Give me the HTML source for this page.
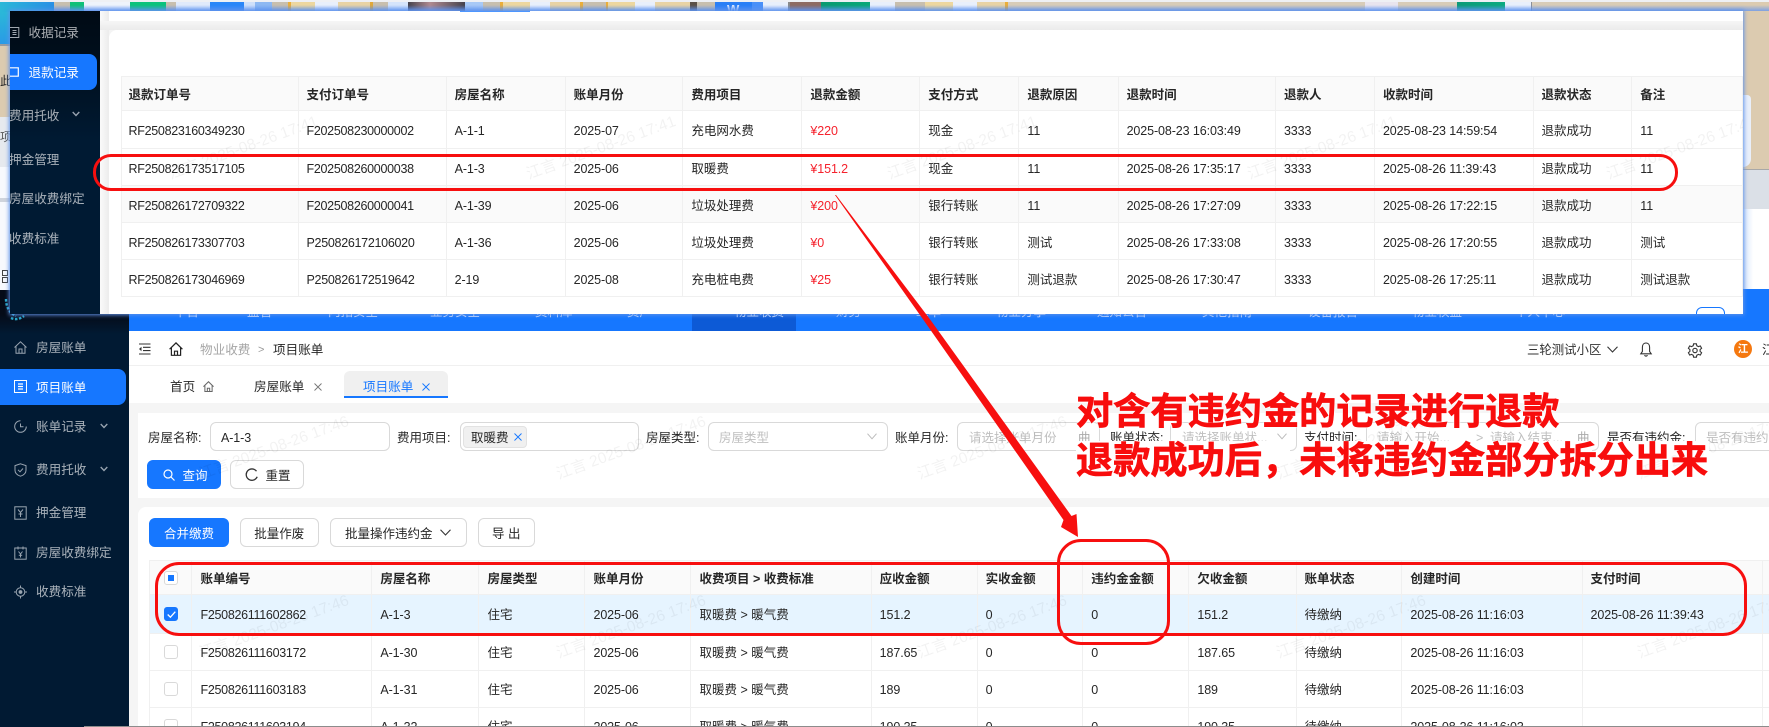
<!DOCTYPE html>
<html lang="zh">
<head>
<meta charset="utf-8">
<title>项目账单</title>
<style>
*{box-sizing:border-box}
html,body{margin:0;padding:0;width:1769px;height:727px;overflow:hidden;background:#fff}
body{position:relative;font-family:"Liberation Sans","Noto Sans CJK SC",sans-serif;font-size:12.5px;color:#262626}
.a{position:absolute}
.t{position:absolute;white-space:nowrap;line-height:16px;height:16px;margin-top:1px}
svg{display:block;overflow:visible}
table{border-collapse:separate;border-spacing:0;table-layout:fixed;position:absolute}
th,td{padding:3px 8px 0;line-height:1;text-align:left;white-space:nowrap;border-right:1px solid #f0f0f0;border-bottom:1px solid #f0f0f0;overflow:hidden;font-size:12.5px}
th{background:#fafafa;font-weight:700;color:#262626;border-top:1px solid #f0f0f0}
th:first-child,td:first-child{border-left:1px solid #f0f0f0;padding-left:7px}
.id{letter-spacing:-.29px}.d{letter-spacing:-.1px}.red{color:#f5222d;letter-spacing:-.1px}
.s td{background:#fafafa}.sel td{background:#e6f4ff}
.wm{position:absolute;white-space:nowrap;font-size:15.5px;line-height:16px;color:rgba(0,0,0,.05);transform:rotate(-20deg);transform-origin:0 100%;pointer-events:none}
.menu{color:rgba(255,255,255,.66);line-height:16px;height:16px;font-size:12.6px;position:absolute;white-space:nowrap}
.box{position:absolute;border:1px solid #d9d9d9;border-radius:6px;background:#fff}
.ph{color:#bfbfbf}
.btn{position:absolute;border:1px solid #d9d9d9;border-radius:6px;background:#fff;height:29px;line-height:28px;padding-top:1px;text-align:center;font-size:12.5px}
.pri{background:#1677ff;border-color:#1677ff;color:#fff}
.cb{display:block;width:14px;height:14px;border:1px solid #d9d9d9;border-radius:3px;background:#fff;margin:-3px 0 0 7px;position:relative}
.nav span{position:absolute;top:-10px;color:#d5e4ff;font-size:12.5px;line-height:16px;white-space:nowrap}
.rb{position:absolute;border:3.2px solid #f70f0f;pointer-events:none}
.big{position:absolute;white-space:nowrap;font-family:'Noto Sans CJK SC','Liberation Sans',sans-serif;font-weight:700;font-size:37.2px;line-height:47px;color:#f80d0d;-webkit-text-stroke:.7px #f80d0d;text-shadow:0 0 1px #fff,0 0 2px #fff,0 0 2px #fff,0 0 3px #fff}
</style>
</head>
<body>

<!-- wallpaper strip and right edge -->
<div class="a" style="left:0;top:0;width:1769px;height:2px;background:#eef0f4"></div>
<div class="a" style="left:0;top:2px;width:1769px;height:10px;background:linear-gradient(90deg,#2bb8d8 0,#2a8fe4 54px,#c8bfae 54px,#c8bfae 70px,#10c078 70px,#10c078 84px,#eef3fb 84px,#eef3fb 130px,#0cc27c 130px,#0cc27c 166px,#c8bfae 166px,#c8bfae 176px,#e0eafb 176px,#e0eafb 210px,#2a86f8 210px,#2a86f8 244px,#cfe0fa 244px,#cfe0fa 255px,#8db8f2 255px,#8db8f2 272px,#c8bfae 272px,#c8bfae 288px,#eaae3a 288px,#eaae3a 291px,#edd79f 291px,#edd79f 315px,#e8effb 315px,#e8effb 338px,#e8d3a4 338px,#e8d3a4 370px,#e0a83a 370px,#e0a83a 373px,#c8bfae 373px,#c8bfae 388px,#d5e4fb 388px,#d5e4fb 408px,#45424c 408px,#b08a90 430px,#45424c 465px,#a8c9f6 465px,#a8c9f6 483px,#c8bfae 483px,#c8bfae 500px,#eaae3a 500px,#eaae3a 503px,#edd79f 503px,#edd79f 530px,#e8effb 530px,#e8effb 550px,#e8d3a4 550px,#e8d3a4 580px,#eaae3a 580px,#eaae3a 583px,#c8bfae 583px,#c8bfae 606px,#eaae3a 606px,#eaae3a 608px,#edd79f 608px,#edd79f 635px,#e8effb 635px,#e8effb 655px,#e8d3a4 655px,#e8d3a4 690px,#5c5148 690px,#5c5148 697px,#c8bfae 697px,#c8bfae 715px,#2a7ff6 715px,#2a7ff6 752px,#4a90f8 752px,#4a90f8 763px,#e8effb 763px,#e8effb 788px,#8a8a8a 788px,#8a8a8a 790px,#8e6a62 790px,#8e6a62 821px,#0a9a70 821px,#0aa878 870px,#e8effb 870px,#e8effb 895px,#c8bfae 895px,#c8bfae 925px,#edd79f 925px,#edd79f 953px,#e8effb 953px,#e8effb 977px,#e8d3a4 977px,#e8d3a4 1005px,#eaae3a 1005px,#eaae3a 1008px,#d8ccb8 1008px,#d8ccb8 1365px,#e8e4ee 1365px,#e8e4ee 1398px,#d8ccb8 1398px,#d8ccb8 1457px,#0c9a78 1457px,#0caa80 1505px,#e8effb 1505px,#e8effb 1531px,#8a8e98 1531px,#8a8e98 1532px,#d8ccb8 1532px,#dccbb0 1769px)"></div>
<div class="a" style="left:727px;top:3px;height:8px;width:20px;overflow:hidden;color:#dfeaff;font-weight:700;font-size:13px;line-height:13px">W</div>
<div class="a" style="left:1420px;top:3px;width:0;height:0"></div>
<div class="a" style="left:54px;top:5px;width:1715px;height:7px;background:linear-gradient(180deg,rgba(110,160,245,0),rgba(90,145,245,.85))"></div>
<div class="a" style="left:1743px;top:11px;width:26px;height:159px;background:#dccbb0"></div>
<div class="a" style="left:1743px;top:95px;width:8px;height:72px;background:#e9effa;border-radius:0 10px 20px 0"></div>
<div class="a" style="left:1743px;top:169px;width:26px;height:40px;background:#dbe0e7;border-top:1px solid #a8a8a8"></div>
<div class="a" style="left:1743px;top:209px;width:26px;height:81px;background:linear-gradient(90deg,#d8e6fb,#fff 40%)"></div>

<!-- left edge -->
<div class="a" style="left:0;top:12px;width:10px;height:32px;background:linear-gradient(180deg,#2bb8d8,#2a9ae6)"></div>
<div class="a" style="left:0;top:44px;width:10px;height:73px;background:#dccbb0;border-top:2px solid #9c9c9c"></div>
<div class="a" style="left:0;top:74px;width:10px;height:14px;overflow:hidden;color:#222;font-size:12px;line-height:14px">此</div>
<div class="a" style="left:0;top:117px;width:10px;height:50px;background:#e6e9ee"></div>
<div class="a" style="left:0;top:130px;width:10px;height:14px;overflow:hidden;color:#555;font-size:12px;line-height:14px">项目</div>
<div class="a" style="left:0;top:167px;width:10px;height:123px;background:#f7f9fd"></div>
<div class="a" style="left:0;top:198px;width:10px;height:4px;background:#cfd4dc"></div>
<div class="a" style="left:2px;top:270px;width:6px;height:6px;border:1.4px solid #444"></div>
<div class="a" style="left:2px;top:277px;width:6px;height:6px;border:1.4px solid #444"></div>

<!-- main app: sidebar -->
<div class="a" style="left:0;top:290px;width:129px;height:437px;background:linear-gradient(180deg,#050b18 0,#050b18 24px,#011a33 44px)"></div>
<svg class="a" style="left:3px;top:296px" width="24" height="28" viewBox="0 0 24 28"><g fill="none" stroke="#28a6c8" stroke-width="2.4" stroke-dasharray="2.5 1.6"><path d="M3 3q0 12 10 17"/><path d="M8 22q6 3 13-2"/></g></svg>

<div class="a" style="left:129px;top:289px;width:1640px;height:42px;background:#1677ff"></div>
<div class="a" style="left:692px;top:289px;width:104px;height:42px;background:#0d5ad6"></div>
<div class="a nav" style="left:129px;top:314px;width:1640px;height:4px;overflow:hidden">
<span style="left:45px">平台</span><span style="left:118px">监管</span><span style="left:199px">内拓安全</span><span style="left:301px">业务安全</span><span style="left:406px">资料库</span><span style="left:498px">资产</span><span style="left:605px">物业收费</span><span style="left:707px">财务</span><span style="left:787px">工单</span><span style="left:867px">物业分享</span><span style="left:968px">通知公告</span><span style="left:1073px">其他指南</span><span style="left:1179px">设备报警</span><span style="left:1283px">物业权益</span><span style="left:1386px">个人中心</span>
</div>

<div class="a" style="left:0;top:369px;width:126px;height:36px;background:#1677ff;border-radius:0 8px 8px 0"></div>
<div class="menu" style="left:36px;top:340px">房屋账单</div>
<div class="menu" style="left:36px;top:380px;color:#fff">项目账单</div>
<div class="menu" style="left:36px;top:419px">账单记录</div>
<div class="menu" style="left:36px;top:462px">费用托收</div>
<div class="menu" style="left:36px;top:505px">押金管理</div>
<div class="menu" style="left:36px;top:545px">房屋收费绑定</div>
<div class="menu" style="left:36px;top:584px">收费标准</div>
<svg class="a" style="left:14px;top:341px" width="13" height="13" viewBox="0 0 13 13" fill="none" stroke="#9aa5b1" stroke-width="1"><path d="M.5 6.5 6.5.8l6 5.7M2 5.5V12.3h9V5.5M5 12.3V8h3v4.3"/></svg>
<svg class="a" style="left:14px;top:380px" width="13" height="13" viewBox="0 0 13 13" fill="none" stroke="#fff" stroke-width="1"><rect x=".5" y=".5" width="12" height="12"/><path d="M4 4h5M4 6.5h5M4 9h5" stroke-width="1.2"/></svg>
<svg class="a" style="left:14px;top:420px" width="13" height="13" viewBox="0 0 13 13" fill="none" stroke="#9aa5b1" stroke-width="1"><path d="M12.3 6.5A5.8 5.8 0 1 1 6.5.7M6.5 3.5v3.2h3"/></svg>
<svg class="a" style="left:14px;top:463px" width="13" height="14" viewBox="0 0 13 14" fill="none" stroke="#9aa5b1" stroke-width="1"><path d="M6.5.8 12 2.6v4.6c0 3-2.6 5-5.5 6-2.900-1-5.500-3-5.500-6V2.600zM4 6.800l2 2 3-3.300"/></svg>
<svg class="a" style="left:14px;top:506px" width="13" height="14" viewBox="0 0 13 14" fill="none" stroke="#9aa5b1" stroke-width="1"><rect x=".8" y=".8" width="11.400" height="12.400"/><path d="M4 3.500l2.500 3 2.500-3M6.500 6.500V11M4.500 8h4"/></svg>
<svg class="a" style="left:14px;top:546px" width="13" height="14" viewBox="0 0 13 14" fill="none" stroke="#9aa5b1" stroke-width="1"><rect x=".8" y="2" width="11.400" height="11.200"/><path d="M4 .5V3.500M9 .5V3.500M4.500 5.500l2 2.500 2-2.500M6.500 8v3.500M4.800 9.300h3.400"/></svg>
<svg class="a" style="left:14px;top:585px" width="13" height="14" viewBox="0 0 13 14" fill="none" stroke="#9aa5b1" stroke-width="1"><circle cx="6.500" cy="7" r="4.300"/><circle cx="6.500" cy="7" r="1.400" fill="#9aa5b1"/><path d="M6.500.5V2.700M6.500 11.300v2.200M0 7h2.200M10.800 7H13"/></svg>
<svg class="a" style="left:100px;top:423px" width="8" height="6" viewBox="0 0 8 6" fill="none" stroke="#9aa5b1" stroke-width="1.300"><path d="M.7 1 4 4.500 7.300 1"/></svg>
<svg class="a" style="left:100px;top:466px" width="8" height="6" viewBox="0 0 8 6" fill="none" stroke="#9aa5b1" stroke-width="1.300"><path d="M.7 1 4 4.500 7.300 1"/></svg>

<!-- main app: content background -->
<div class="a" style="left:129px;top:331px;width:1640px;height:396px;background:#f5f5f5"></div>
<div class="a" style="left:129px;top:331px;width:1640px;height:35px;background:#fff;border-bottom:1px solid #f0f0f0"></div>
<svg class="a" style="left:138px;top:343px" width="13" height="12" viewBox="0 0 13 12" fill="none" stroke="#333" stroke-width="1.100"><path d="M1 1h11.500M5 4.300h7.500M5 7.600h7.500M1 11h11.500"/><path d="M3.500 3.800 1 6l2.500 2.200z" fill="#333" stroke="none"/></svg>
<svg class="a" style="left:169px;top:342px" width="14" height="14" viewBox="0 0 14 14" fill="none" stroke="#222" stroke-width="1.200"><path d="M.6 7.200 7 .9l6.400 6.300M2.400 5.800v7.500h9.200V5.800M5.500 13.300V9.200h3v4.100"/></svg>
<div class="t" style="left:200px;top:341px;color:#a6a6a6;font-size:12.600px">物业收费</div>
<div class="t" style="left:258px;top:341px;color:#999;font-size:11px">&gt;</div>
<div class="t" style="left:273px;top:341px;font-size:12.600px">项目账单</div>
<div class="t" style="left:1527px;top:341px;font-size:12.400px;color:#333">三轮测试小区</div>
<svg class="a" style="left:1607px;top:346px" width="11" height="7" viewBox="0 0 11 7" fill="none" stroke="#333" stroke-width="1.100"><path d="M.5.700 5.500 6l5-5.300"/></svg>
<svg class="a" style="left:1640px;top:342px" width="12" height="15" viewBox="0 0 12 15" fill="none" stroke="#333" stroke-width="1.100"><path d="M6 1C3.600 1 2.400 3 2.400 5.200v4.300L.8 11.800h10.400L9.600 9.500V5.200C9.600 3 8.400 1 6 1zM4.500 13.200c.8 1.300 2.200 1.300 3 0"/></svg>
<svg class="a" style="left:1688px;top:343px" width="14" height="14" viewBox="0 0 14 14" fill="none" stroke="#333" stroke-width="1.100"><path d="M5.600.8h2.800l.4 1.900 1.700.9 1.800-.7 1.300 2.400-1.500 1.300v1.800l1.500 1.300-1.300 2.400-1.800-.7-1.700.9-.4 1.900H5.600l-.4-1.900-1.700-.9-1.800.7L.4 9.700l1.500-1.300V6.600L.4 5.300l1.300-2.400 1.800.7 1.700-.9z"/><circle cx="7" cy="7.500" r="2.200"/></svg>
<div class="a" style="left:1734px;top:340px;width:18px;height:18px;border-radius:50%;background:#f5780f;color:#fff;text-align:center;font-size:10.500px;line-height:18px;font-weight:700">江</div>
<div class="t" style="left:1762px;top:341px;font-size:12.600px">江</div>

<!-- tabs -->
<div class="a" style="left:129px;top:366px;width:1640px;height:37px;background:#fff"></div>
<div class="a" style="left:344px;top:371px;width:104px;height:27px;background:#f0f0f0;border-radius:6px 6px 0 0;border-bottom:2px solid #1677ff"></div>
<div class="t" style="left:170px;top:378px;font-size:12.600px">首页</div>
<svg class="a" style="left:203px;top:381px" width="11" height="11" viewBox="0 0 14 14" fill="none" stroke="#666" stroke-width="1.300"><path d="M.6 7.200 7 .9l6.400 6.300M2.400 5.800v7.500h9.200V5.800M5.500 13.300V9.200h3v4.100"/></svg>
<div class="t" style="left:254px;top:378px;font-size:12.600px">房屋账单</div>
<svg class="a" style="left:314px;top:383px" width="8" height="8" viewBox="0 0 8 8" stroke="#777" stroke-width=".9"><path d="M.5.500l7 7M7.500.500l-7 7"/></svg>
<div class="t" style="left:363px;top:378px;font-size:12.600px;color:#1677ff">项目账单</div>
<svg class="a" style="left:422px;top:383px" width="8" height="8" viewBox="0 0 8 8" stroke="#1677ff" stroke-width=".9"><path d="M.5.500l7 7M7.500.500l-7 7"/></svg>

<!-- filter panel -->
<div class="a" style="left:138px;top:413px;width:1631px;height:85px;background:#fff"></div>
<div class="t" style="left:148px;top:429px">房屋名称:</div>
<div class="box" style="left:210px;top:422px;width:180px;height:29px"></div>
<div class="t" style="left:221px;top:429px;letter-spacing:-.1px">A-1-3</div>
<div class="t" style="left:397px;top:429px">费用项目:</div>
<div class="box" style="left:460px;top:422px;width:179px;height:29px"></div>
<div class="a" style="left:463px;top:426px;width:64px;height:22px;background:#f0f0f0;border:1px solid #e2e2e2;border-radius:4px"></div>
<div class="t" style="left:471px;top:429px">取暖费</div>
<svg class="a" style="left:514px;top:433px" width="8" height="8" viewBox="0 0 8 8" stroke="#1677ff" stroke-width=".9"><path d="M.5.500l7 7M7.500.500l-7 7"/></svg>
<div class="t" style="left:646px;top:429px">房屋类型:</div>
<div class="box" style="left:708px;top:422px;width:180px;height:29px"></div>
<div class="t ph" style="left:719px;top:429px">房屋类型</div>
<svg class="a" style="left:867px;top:433px" width="10" height="7" viewBox="0 0 10 7" fill="none" stroke="#bbb" stroke-width="1"><path d="M.5.700 5 5.800 9.500.700"/></svg>
<div class="t" style="left:895px;top:429px">账单月份:</div>
<div class="box" style="left:957px;top:422px;width:143px;height:29px"></div>
<div class="t ph" style="left:969px;top:429px">请选择账单月份</div>
<div class="t ph" style="left:1078px;top:429px;color:#aaa">曲</div>
<div class="t" style="left:1110px;top:429px">账单状态:</div>
<div class="box" style="left:1170px;top:422px;width:127px;height:29px"></div>
<div class="t ph" style="left:1182px;top:429px">请选择账单状...</div>
<svg class="a" style="left:1277px;top:433px" width="10" height="7" viewBox="0 0 10 7" fill="none" stroke="#bbb" stroke-width="1"><path d="M.5.700 5 5.800 9.500.700"/></svg>
<div class="t" style="left:1304px;top:429px">支付时间:</div>
<div class="box" style="left:1366px;top:422px;width:233px;height:29px"></div>
<div class="t ph" style="left:1377px;top:429px">请输入开始...</div>
<div class="t ph" style="left:1476px;top:429px">&gt;</div>
<div class="t ph" style="left:1490px;top:429px">请输入结束...</div>
<div class="t ph" style="left:1577px;top:429px;color:#aaa">曲</div>
<div class="t" style="left:1607px;top:429px">是否有违约金:</div>
<div class="box" style="left:1695px;top:422px;width:100px;height:29px"></div>
<div class="t ph" style="left:1706px;top:429px">是否有违约金</div>

<div class="btn pri" style="left:147px;top:460px;width:74px;padding-left:22px">查询</div>
<svg class="a" style="left:163px;top:469px" width="12" height="12" viewBox="0 0 12 12" fill="none" stroke="#fff" stroke-width="1.200"><circle cx="5" cy="5" r="4"/><path d="m8 8 3.500 3.500"/></svg>
<div class="btn" style="left:230px;top:460px;width:74px;padding-left:22px">重置</div>
<svg class="a" style="left:245px;top:468px" width="13" height="13" viewBox="0 0 13 13" fill="none" stroke="#333" stroke-width="1.300"><path d="M11.500 3.200A5.700 5.700 0 1 0 12.200 8.800"/></svg>

<!-- table panel -->
<div class="a" style="left:138px;top:507px;width:1631px;height:220px;background:#fff;border-radius:8px 0 0 0;overflow:hidden"></div>
<div class="btn pri" style="left:149px;top:518px;width:80px">合并缴费</div>
<div class="btn" style="left:239.500px;top:518px;width:79.500px">批量作废</div>
<div class="btn" style="left:330px;top:518px;width:137px;text-align:left;padding-left:14px">批量操作违约金</div>
<svg class="a" style="left:440px;top:529px" width="11" height="7" viewBox="0 0 11 7" fill="none" stroke="#333" stroke-width="1.100"><path d="M.5.700 5.500 6l5-5.300"/></svg>
<div class="btn" style="left:477.500px;top:518px;width:57.500px">导 出</div>

<div class="a" style="left:0;top:0;width:1769px;height:726px;overflow:hidden;pointer-events:none">
<table style="left:149.300px;top:560px;width:1663.300px">
<colgroup><col style="width:43.200px"><col style="width:179.900px"><col style="width:107.100px"><col style="width:106px"><col style="width:106px"><col style="width:180.200px"><col style="width:106px"><col style="width:105.600px"><col style="width:106.100px"><col style="width:107.200px"><col style="width:105.900px"><col style="width:180.100px"><col style="width:180px"><col style="width:50px"></colgroup>
<tr style="height:35px"><th><span class="cb"><span class="a" style="left:3px;top:3px;width:6px;height:6px;background:#1677ff"></span></span></th><th>账单编号</th><th>房屋名称</th><th>房屋类型</th><th>账单月份</th><th>收费项目 &gt; 收费标准</th><th>应收金额</th><th>实收金额</th><th>违约金金额</th><th>欠收金额</th><th>账单状态</th><th>创建时间</th><th>支付时间</th><th></th></tr>
<tr class="sel" style="height:38.700px"><td><span class="cb" style="background:#1677ff;border-color:#1677ff"><svg class="a" style="left:2px;top:3px" width="9" height="7" viewBox="0 0 9 7" fill="none" stroke="#fff" stroke-width="1.300"><path d="m.7 3.500 2.700 2.700L8.300.7"/></svg></span></td><td class="id">F250826111602862</td><td class="d">A-1-3</td><td>住宅</td><td class="d">2025-06</td><td>取暖费 &gt; 暖气费</td><td class="d">151.2</td><td class="d">0</td><td class="d">0</td><td class="d">151.2</td><td>待缴纳</td><td class="d">2025-08-26 11:16:03</td><td class="d">2025-08-26 11:39:43</td><td></td></tr>
<tr style="height:37px"><td><span class="cb"></span></td><td class="id">F250826111603172</td><td class="d">A-1-30</td><td>住宅</td><td class="d">2025-06</td><td>取暖费 &gt; 暖气费</td><td class="d">187.65</td><td class="d">0</td><td class="d">0</td><td class="d">187.65</td><td>待缴纳</td><td class="d">2025-08-26 11:16:03</td><td></td><td></td></tr>
<tr style="height:37px"><td><span class="cb"></span></td><td class="id">F250826111603183</td><td class="d">A-1-31</td><td>住宅</td><td class="d">2025-06</td><td>取暖费 &gt; 暖气费</td><td class="d">189</td><td class="d">0</td><td class="d">0</td><td class="d">189</td><td>待缴纳</td><td class="d">2025-08-26 11:16:03</td><td></td><td></td></tr>
<tr style="height:37px"><td><span class="cb"></span></td><td class="id">F250826111603194</td><td class="d">A-1-32</td><td>住宅</td><td class="d">2025-06</td><td>取暖费 &gt; 暖气费</td><td class="d">190.35</td><td class="d">0</td><td class="d">0</td><td class="d">190.35</td><td>待缴纳</td><td class="d">2025-08-26 11:16:03</td><td></td><td></td></tr>
</table>
<div class="wm" style="left:203px;top:467px">江言 2025-08-26 17:46</div>
<div class="wm" style="left:560px;top:467px">江言 2025-08-26 17:46</div>
<div class="wm" style="left:921px;top:467px">江言 2025-08-26 17:46</div>
<div class="wm" style="left:1280px;top:467px">江言 2025-08-26 17:46</div>
<div class="wm" style="left:1641px;top:467px">江言 2025-08-26 17:46</div>
<div class="wm" style="left:203px;top:646px">江言 2025-08-26 17:46</div>
<div class="wm" style="left:560px;top:646px">江言 2025-08-26 17:46</div>
<div class="wm" style="left:921px;top:646px">江言 2025-08-26 17:46</div>
<div class="wm" style="left:1280px;top:646px">江言 2025-08-26 17:46</div>
<div class="wm" style="left:1641px;top:646px">江言 2025-08-26 17:46</div>
</div>
<div class="a" style="left:84px;top:726px;width:1685px;height:1px;background:#8c8c8c"></div>

<!-- overlay window -->
<div class="a" style="left:10px;top:11px;width:1733px;height:303px;background:#fff;box-shadow:0 0 4px 1px #5f93ea;overflow:hidden">
  <div class="a" style="left:0;top:0;width:90px;height:303px;background:linear-gradient(180deg,#000a14 0,#00101f 60px,#001a33 130px)"></div>
  <div class="a" style="left:90px;top:0;width:1643px;height:303px;background:#f4f4f4"></div>
  <div class="a" style="left:90px;top:0;width:1643px;height:10px;background:#fff"></div>
  <div class="a" style="left:90px;top:0;width:9px;height:303px;background:linear-gradient(90deg,#fafafa,#ececec)"></div>
  <div class="a" style="left:90px;top:10px;width:1643px;height:9px;background:linear-gradient(180deg,#f6f6f6,#ebebeb)"></div>
  <div class="a" style="left:99px;top:19px;width:1634px;height:284px;background:#fff;border-radius:8px 0 0 0"></div>
  <div class="a" style="left:450px;top:0;width:70px;height:1px;background:#4d96ff"></div>

  <div class="a" style="left:0;top:43px;width:87px;height:36px;background:#1677ff;border-radius:0 8px 8px 0"></div>
  <div class="menu" style="left:18.500px;top:14px">收据记录</div>
  <div class="menu" style="left:18.500px;top:54px;color:#fff">退款记录</div>
  <div class="menu" style="left:-1px;top:97px">费用托收</div>
  <div class="menu" style="left:-1px;top:141px">押金管理</div>
  <div class="menu" style="left:-1px;top:180px">房屋收费绑定</div>
  <div class="menu" style="left:-1px;top:220px">收费标准</div>
  <svg class="a" style="left:0;top:16px" width="10" height="11" viewBox="0 0 10 11" fill="none" stroke="#a0a8b0" stroke-width="1"><path d="M0 .5h8.800v10H0M2.500 3.500h4M2.500 5.500h4M2.500 7.500h4"/></svg>
  <svg class="a" style="left:0;top:56px" width="9" height="10" viewBox="0 0 9 10" fill="none" stroke="#fff" stroke-width="1.200"><path d="M0 .8h8.300v8.400H0"/></svg>
  <svg class="a" style="left:62px;top:100px" width="8" height="6" viewBox="0 0 8 6" fill="none" stroke="#9aa5b1" stroke-width="1.300"><path d="M.7 1 4 4.500 7.300 1"/></svg>

  <table style="left:110.500px;top:65px;width:1621.700px">
  <colgroup><col style="width:178px"><col style="width:148.100px"><col style="width:119px"><col style="width:117.800px"><col style="width:119px"><col style="width:117.900px"><col style="width:99.100px"><col style="width:99.200px"><col style="width:157.400px"><col style="width:99px"><col style="width:158.600px"><col style="width:98.700px"><col style="width:110.700px"></colgroup>
  <tr style="height:35.300px"><th>退款订单号</th><th>支付订单号</th><th>房屋名称</th><th>账单月份</th><th>费用项目</th><th>退款金额</th><th>支付方式</th><th>退款原因</th><th>退款时间</th><th>退款人</th><th>收款时间</th><th>退款状态</th><th>备注</th></tr>
  <tr style="height:38px"><td class="id">RF250823160349230</td><td class="id">F202508230000002</td><td class="d">A-1-1</td><td class="d">2025-07</td><td>充电网水费</td><td class="red">¥220</td><td>现金</td><td>11</td><td class="d">2025-08-23 16:03:49</td><td class="d">3333</td><td class="d">2025-08-23 14:59:54</td><td>退款成功</td><td>11</td></tr>
  <tr style="height:37px"><td class="id">RF250826173517105</td><td class="id">F202508260000038</td><td class="d">A-1-3</td><td class="d">2025-06</td><td>取暖费</td><td class="red">¥151.2</td><td>现金</td><td>11</td><td class="d">2025-08-26 17:35:17</td><td class="d">3333</td><td class="d">2025-08-26 11:39:43</td><td>退款成功</td><td>11</td></tr>
  <tr class="s" style="height:37px"><td class="id">RF250826172709322</td><td class="id">F202508260000041</td><td class="d">A-1-39</td><td class="d">2025-06</td><td>垃圾处理费</td><td class="red">¥200</td><td>银行转账</td><td>11</td><td class="d">2025-08-26 17:27:09</td><td class="d">3333</td><td class="d">2025-08-26 17:22:15</td><td>退款成功</td><td>11</td></tr>
  <tr style="height:37px"><td class="id">RF250826173307703</td><td class="id">P250826172106020</td><td class="d">A-1-36</td><td class="d">2025-06</td><td>垃圾处理费</td><td class="red">¥0</td><td>银行转账</td><td>测试</td><td class="d">2025-08-26 17:33:08</td><td class="d">3333</td><td class="d">2025-08-26 17:20:55</td><td>退款成功</td><td>测试</td></tr>
  <tr style="height:37px"><td class="id">RF250826173046969</td><td class="id">P250826172519642</td><td class="d">2-19</td><td class="d">2025-08</td><td>充电桩电费</td><td class="red">¥25</td><td>银行转账</td><td>测试退款</td><td class="d">2025-08-26 17:30:47</td><td class="d">3333</td><td class="d">2025-08-26 17:25:11</td><td>退款成功</td><td>测试退款</td></tr>
  </table>

  <div class="a" style="left:1686px;top:296px;width:29px;height:12px;border:1px solid #1677ff;border-radius:6px 6px 0 0;background:#fff"></div>

  <div class="wm" style="left:162px;top:156px">江言 2025-08-26 17:41</div>
  <div class="wm" style="left:520px;top:156px">江言 2025-08-26 17:41</div>
  <div class="wm" style="left:881px;top:156px">江言 2025-08-26 17:41</div>
  <div class="wm" style="left:1241px;top:156px">江言 2025-08-26 17:41</div>
  <div class="wm" style="left:1600px;top:156px">江言 2025-08-26 17:41</div>
</div>

<!-- annotations -->
<div class="rb" style="left:93px;top:153.500px;width:1585px;height:37px;border-radius:18px"></div>
<div class="rb" style="left:155px;top:561.500px;width:1592px;height:74px;border-radius:24px"></div>
<div class="rb" style="left:1057px;top:538.500px;width:113px;height:106px;border-radius:24px"></div>
<svg class="a" style="left:0;top:0" width="1769" height="727" viewBox="0 0 1769 727"><polygon fill="#f70f0f" points="835,195 923.500,320 1063.500,520 1061,527 1078,537 1076.500,514 1071.500,516 930.500,320 836,195"/></svg>
<div class="a" style="left:1076px;top:441px;width:214px;height:11px;background:#fff"></div>
<div class="a" style="left:1300px;top:441px;width:292px;height:11px;background:#fff"></div>
<div class="a" style="left:1602px;top:441px;width:107px;height:11px;background:#fff"></div>
<div class="big" style="left:1076px;top:385px">对含有违约金的记录进行退款</div>
<div class="big" style="left:1076px;top:434px">退款成功后，未将违约金部分拆分出来</div>
</body>
</html>
